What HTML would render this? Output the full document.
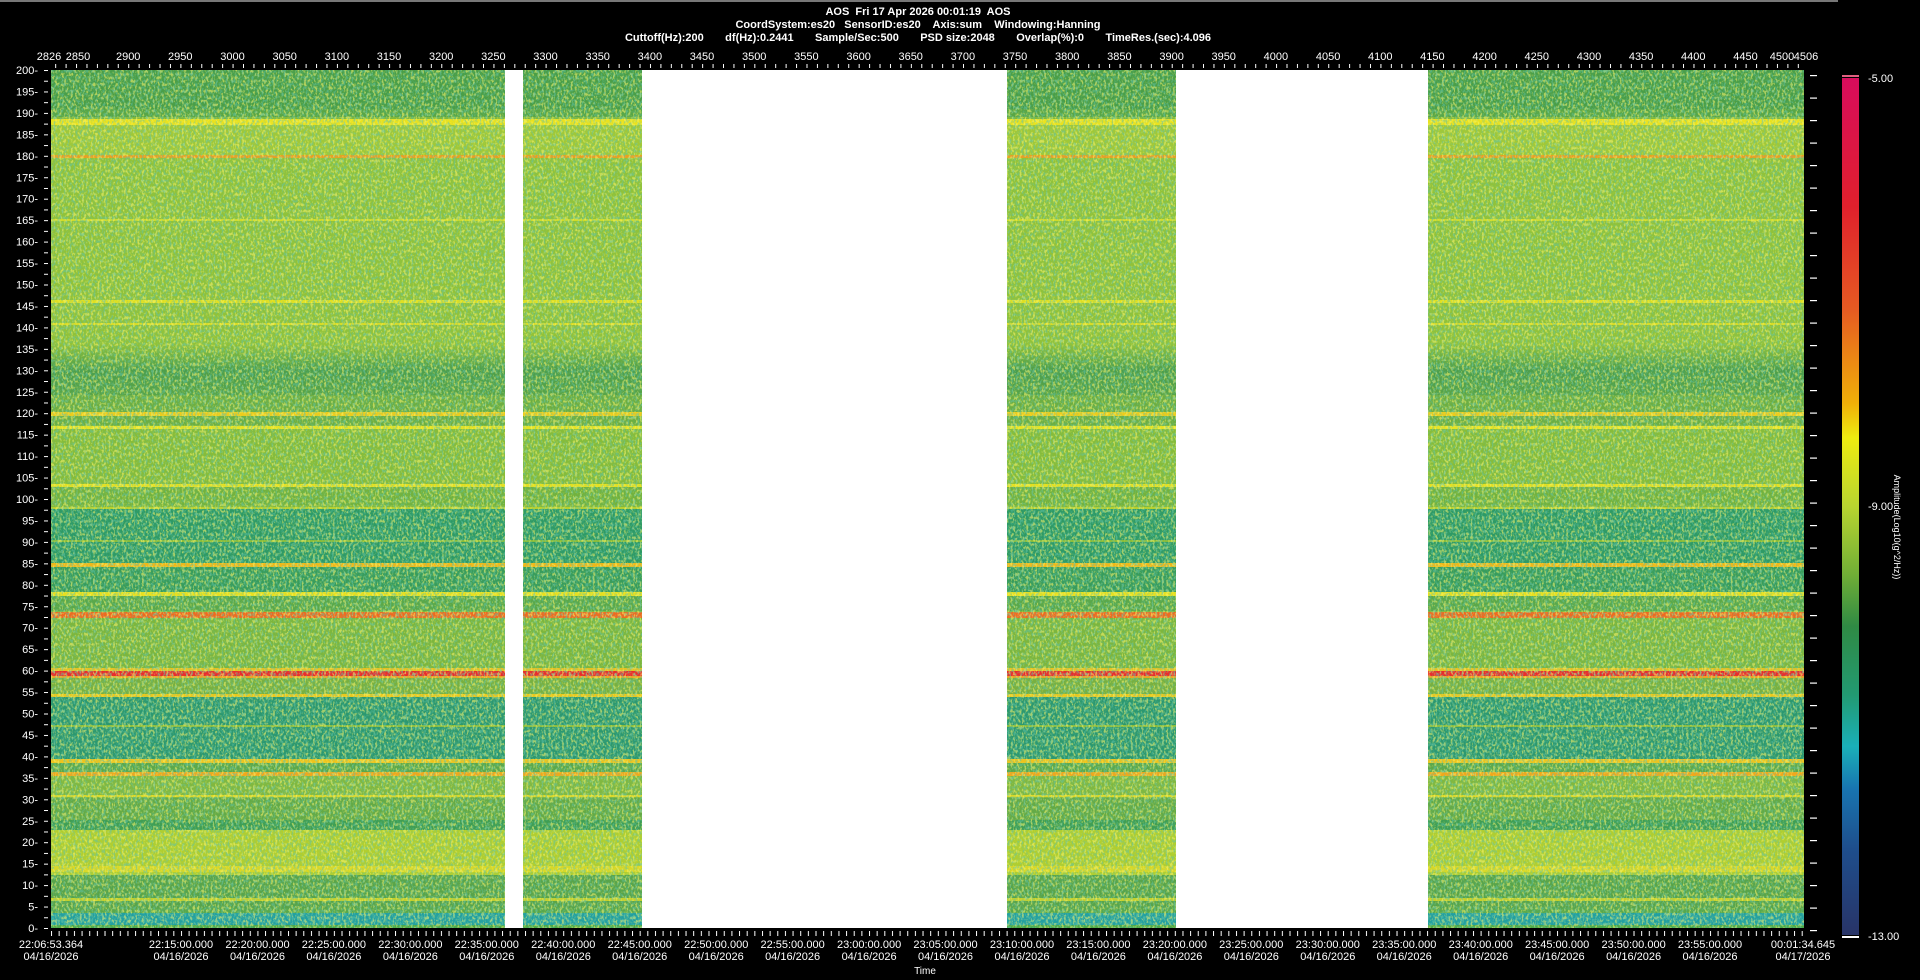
<!DOCTYPE html>
<html><head><meta charset="utf-8"><style>
html,body{margin:0;padding:0;background:#000;width:1920px;height:980px;overflow:hidden}
svg{display:block}
text{font-family:"Liberation Sans",sans-serif;fill:#fff;font-size:11px}
.t{font-weight:bold;font-size:11px;white-space:pre}
</style></head><body>
<svg width="1920" height="980" viewBox="0 0 1920 980" xmlns="http://www.w3.org/2000/svg">
<defs>
<filter id="ny" x="0" y="0" width="100%" height="100%">
<feTurbulence type="fractalNoise" baseFrequency="0.45 0.3" numOctaves="2" seed="3"/>
<feColorMatrix values="0 0 0 0 0.92  0 0 0 0 0.9  0 0 0 0 0.15  5 0 0 0 -2.4"/>
</filter>
<filter id="nd" x="0" y="0" width="100%" height="100%">
<feTurbulence type="fractalNoise" baseFrequency="0.5 0.3" numOctaves="2" seed="9"/>
<feColorMatrix values="0 0 0 0 0.12  0 0 0 0 0.55  0 0 0 0 0.4  5 0 0 0 -2.4"/>
</filter>
<linearGradient id="cb" x1="0" y1="0" x2="0" y2="1">
<stop offset="0" stop-color="#d80c5c"/>
<stop offset="0.15" stop-color="#e0202c"/>
<stop offset="0.27" stop-color="#e65a22"/>
<stop offset="0.38" stop-color="#f0b008"/>
<stop offset="0.42" stop-color="#eeec10"/>
<stop offset="0.5" stop-color="#b8d430"/>
<stop offset="0.58" stop-color="#70ae36"/>
<stop offset="0.64" stop-color="#2f8a44"/>
<stop offset="0.72" stop-color="#229a72"/>
<stop offset="0.78" stop-color="#1ab0b8"/>
<stop offset="0.83" stop-color="#1874b0"/>
<stop offset="0.9" stop-color="#1e4e8c"/>
<stop offset="1" stop-color="#283468"/>
</linearGradient>
<linearGradient id="dk" x1="0" y1="0" x2="0" y2="1">
<stop offset="0" stop-color="#8ec03a"/>
<stop offset="0.5" stop-color="#4c9e4c"/>
<stop offset="1" stop-color="#58a448"/>
</linearGradient>
<pattern id="tt" x="55.17" y="0" width="10.435" height="10" patternUnits="userSpaceOnUse"><rect x="0" y="0" width="1" height="10" fill="#fff"/></pattern>
<pattern id="bt" x="51" y="0" width="7.645" height="10" patternUnits="userSpaceOnUse"><rect x="0" y="0" width="1" height="10" fill="#fff"/></pattern>
<pattern id="lt" x="0" y="70" width="10" height="10.725" patternUnits="userSpaceOnUse"><rect x="0" y="0" width="10" height="1" fill="#fff"/></pattern>
<pattern id="rt" x="0" y="75" width="10" height="22.5" patternUnits="userSpaceOnUse"><rect x="0" y="0" width="10" height="1.2" fill="#fff"/></pattern>
</defs>
<rect x="0" y="0" width="1838" height="2" fill="#777"/>

<text class="t" x="918" y="15" text-anchor="middle" xml:space="preserve">AOS  Fri 17 Apr 2026 00:01:19  AOS</text>
<text class="t" x="918" y="28" text-anchor="middle" xml:space="preserve">CoordSystem:es20   SensorID:es20    Axis:sum    Windowing:Hanning</text>
<text class="t" x="918" y="41" text-anchor="middle" xml:space="preserve">Cuttoff(Hz):200       df(Hz):0.2441       Sample/Sec:500       PSD size:2048       Overlap(%):0       TimeRes.(sec):4.096</text>

<g>
<rect x="51" y="70" width="1753" height="858" fill="#80b83c"/>
<rect x="51" y="70" width="1753" height="39" fill="#4a9e48"/>
<rect x="51" y="109" width="1753" height="8" fill="#58a646"/>
<rect x="51" y="119" width="1753" height="6" fill="#eae21e"/>
<rect x="51" y="125" width="1753" height="30" fill="#a0c838"/>
<rect x="51" y="155" width="1753" height="3" fill="#e8a020"/>
<rect x="51" y="158" width="1753" height="200" fill="#90c23a"/>
<rect x="51" y="219" width="1753" height="2" fill="#d0dc28"/>
<rect x="51" y="300" width="1753" height="3" fill="#e0e020"/>
<rect x="51" y="323" width="1753" height="2" fill="#d8dc24"/>
<rect x="51" y="345" width="1753" height="50" fill="url(#dk)"/>
<rect x="51" y="412" width="1753" height="4" fill="#eccc1c"/>
<rect x="51" y="395" width="1753" height="17" fill="#6cae42"/>
<rect x="51" y="416" width="1753" height="9" fill="#6cae42"/>
<rect x="51" y="426" width="1753" height="3" fill="#e8e420"/>
<rect x="51" y="429" width="1753" height="55" fill="#86bc3a"/>
<rect x="51" y="484" width="1753" height="3" fill="#e4e020"/>
<rect x="51" y="487" width="1753" height="18" fill="#72b23e"/>
<rect x="51" y="507" width="1753" height="2" fill="#b8d02c"/>
<rect x="51" y="509" width="1753" height="54" fill="#2e9a66"/>
<rect x="51" y="540" width="1753" height="2" fill="#88bc3a"/>
<rect x="51" y="563" width="1753" height="4" fill="#f0b818"/>
<rect x="51" y="567" width="1753" height="25" fill="#389c5c"/>
<rect x="51" y="592" width="1753" height="4" fill="#e8e01e"/>
<rect x="51" y="596" width="1753" height="15" fill="#5aa84a"/>
<rect x="51" y="612" width="1753" height="6" fill="#ee6a20"/>
<rect x="51" y="618" width="1753" height="50" fill="#7cb63e"/>
<rect x="51" y="668" width="1753" height="3" fill="#e8c020"/>
<rect x="51" y="671" width="1753" height="5" fill="#e82c2c"/>
<rect x="51" y="676" width="1753" height="2" fill="#f0a020"/>
<rect x="51" y="678" width="1753" height="16" fill="#78b040"/>
<rect x="51" y="694" width="1753" height="3" fill="#eac81c"/>
<rect x="51" y="697" width="1753" height="62" fill="#2c9870"/>
<rect x="51" y="725" width="1753" height="2" fill="#8abc3a"/>
<rect x="51" y="759" width="1753" height="4" fill="#eec41c"/>
<rect x="51" y="763" width="1753" height="9" fill="#5ca84a"/>
<rect x="51" y="772" width="1753" height="4" fill="#f0a81c"/>
<rect x="51" y="776" width="1753" height="22" fill="#80b840"/>
<rect x="51" y="795" width="1753" height="2" fill="#dcd824"/>
<rect x="51" y="798" width="1753" height="22" fill="#64aa46"/>
<rect x="51" y="820" width="1753" height="10" fill="#3f9e54"/>
<rect x="51" y="830" width="1753" height="45" fill="#b0ce30"/>
<rect x="51" y="866" width="1753" height="6" fill="#d8d826"/>
<rect x="51" y="875" width="1753" height="33" fill="#58a44a"/>
<rect x="51" y="898" width="1753" height="3" fill="#c4d02a"/>
<rect x="51" y="908" width="1753" height="5" fill="#58a84c"/>
<rect x="51" y="913" width="1753" height="12" fill="#22a0a0"/>
<rect x="51" y="925" width="1753" height="3" fill="#4aa848"/>
<rect x="51" y="70" width="1753" height="858" filter="url(#ny)" opacity="0.6"/>
<rect x="51" y="70" width="1753" height="858" filter="url(#nd)" opacity="0.55"/>
</g>
<rect x="505" y="70" width="18" height="858" fill="#fff"/>
<rect x="642" y="70" width="365" height="858" fill="#fff"/>
<rect x="1176" y="70" width="252" height="858" fill="#fff"/>

<rect x="51" y="64" width="1753" height="4" fill="url(#tt)"/>
<rect x="51" y="931" width="1753" height="5" fill="url(#bt)"/>
<rect x="44" y="70" width="4" height="859" fill="url(#lt)"/>
<rect x="1810" y="75" width="7" height="860" fill="url(#rt)"/>

<g text-anchor="middle">
<text x="49" y="60">2826</text><text x="78" y="60">2850</text><text x="128.2" y="60">2900</text><text x="180.3" y="60">2950</text><text x="232.5" y="60">3000</text><text x="284.7" y="60">3050</text><text x="336.9" y="60">3100</text><text x="389" y="60">3150</text><text x="441.2" y="60">3200</text><text x="493.4" y="60">3250</text><text x="545.5" y="60">3300</text><text x="597.7" y="60">3350</text><text x="649.9" y="60">3400</text><text x="702" y="60">3450</text><text x="754.2" y="60">3500</text><text x="806.4" y="60">3550</text><text x="858.6" y="60">3600</text><text x="910.7" y="60">3650</text><text x="962.9" y="60">3700</text><text x="1015" y="60">3750</text><text x="1067.2" y="60">3800</text><text x="1119.4" y="60">3850</text><text x="1171.6" y="60">3900</text><text x="1223.7" y="60">3950</text><text x="1275.9" y="60">4000</text><text x="1328.1" y="60">4050</text><text x="1380.3" y="60">4100</text><text x="1432.4" y="60">4150</text><text x="1484.6" y="60">4200</text><text x="1536.8" y="60">4250</text><text x="1589" y="60">4300</text><text x="1641.1" y="60">4350</text><text x="1693.3" y="60">4400</text><text x="1745.5" y="60">4450</text><text x="1782" y="60">4500</text><text x="1806" y="60">4506</text>
</g>

<g text-anchor="end">
<text x="38" y="74">200-</text><text x="38" y="95.5">195-</text><text x="38" y="116.9">190-</text><text x="38" y="138.4">185-</text><text x="38" y="159.8">180-</text><text x="38" y="181.3">175-</text><text x="38" y="202.7">170-</text><text x="38" y="224.2">165-</text><text x="38" y="245.6">160-</text><text x="38" y="267.1">155-</text><text x="38" y="288.5">150-</text><text x="38" y="310">145-</text><text x="38" y="331.4">140-</text><text x="38" y="352.9">135-</text><text x="38" y="374.3">130-</text><text x="38" y="395.8">125-</text><text x="38" y="417.2">120-</text><text x="38" y="438.7">115-</text><text x="38" y="460.1">110-</text><text x="38" y="481.6">105-</text><text x="38" y="503">100-</text><text x="38" y="524.5">95-</text><text x="38" y="545.9">90-</text><text x="38" y="567.4">85-</text><text x="38" y="588.8">80-</text><text x="38" y="610.3">75-</text><text x="38" y="631.7">70-</text><text x="38" y="653.2">65-</text><text x="38" y="674.6">60-</text><text x="38" y="696.1">55-</text><text x="38" y="717.5">50-</text><text x="38" y="739">45-</text><text x="38" y="760.4">40-</text><text x="38" y="781.9">35-</text><text x="38" y="803.3">30-</text><text x="38" y="824.8">25-</text><text x="38" y="846.2">20-</text><text x="38" y="867.7">15-</text><text x="38" y="889.1">10-</text><text x="38" y="910.6">5-</text><text x="38" y="932">0-</text>
</g>

<g text-anchor="middle">
<text x="51" y="948">22:06:53.364</text><text x="51" y="960">04/16/2026</text>
<text x="181" y="948">22:15:00.000</text><text x="181" y="960">04/16/2026</text>
<text x="257.5" y="948">22:20:00.000</text><text x="257.5" y="960">04/16/2026</text>
<text x="333.9" y="948">22:25:00.000</text><text x="333.9" y="960">04/16/2026</text>
<text x="410.4" y="948">22:30:00.000</text><text x="410.4" y="960">04/16/2026</text>
<text x="486.8" y="948">22:35:00.000</text><text x="486.8" y="960">04/16/2026</text>
<text x="563.3" y="948">22:40:00.000</text><text x="563.3" y="960">04/16/2026</text>
<text x="639.7" y="948">22:45:00.000</text><text x="639.7" y="960">04/16/2026</text>
<text x="716.2" y="948">22:50:00.000</text><text x="716.2" y="960">04/16/2026</text>
<text x="792.6" y="948">22:55:00.000</text><text x="792.6" y="960">04/16/2026</text>
<text x="869.1" y="948">23:00:00.000</text><text x="869.1" y="960">04/16/2026</text>
<text x="945.5" y="948">23:05:00.000</text><text x="945.5" y="960">04/16/2026</text>
<text x="1022" y="948">23:10:00.000</text><text x="1022" y="960">04/16/2026</text>
<text x="1098.4" y="948">23:15:00.000</text><text x="1098.4" y="960">04/16/2026</text>
<text x="1174.9" y="948">23:20:00.000</text><text x="1174.9" y="960">04/16/2026</text>
<text x="1251.3" y="948">23:25:00.000</text><text x="1251.3" y="960">04/16/2026</text>
<text x="1327.8" y="948">23:30:00.000</text><text x="1327.8" y="960">04/16/2026</text>
<text x="1404.2" y="948">23:35:00.000</text><text x="1404.2" y="960">04/16/2026</text>
<text x="1480.7" y="948">23:40:00.000</text><text x="1480.7" y="960">04/16/2026</text>
<text x="1557.1" y="948">23:45:00.000</text><text x="1557.1" y="960">04/16/2026</text>
<text x="1633.6" y="948">23:50:00.000</text><text x="1633.6" y="960">04/16/2026</text>
<text x="1710" y="948">23:55:00.000</text><text x="1710" y="960">04/16/2026</text>
<text x="1803" y="948">00:01:34.645</text><text x="1803" y="960">04/17/2026</text>
<text x="925" y="974" style="font-size:10px">Time</text>
</g>

<rect x="1842" y="75" width="17" height="2" fill="#e06080"/>
<rect x="1842" y="78" width="17" height="857" fill="url(#cb)"/>
<rect x="1842" y="936" width="17" height="2" fill="#fff"/>
<text x="1868" y="82">-5.00</text>
<text x="1868" y="510">-9.00</text>
<text x="1868" y="940">-13.00</text>
<text transform="translate(1894,527) rotate(90)" text-anchor="middle" style="font-size:9px">Amplitude(Log10(g^2/Hz))</text>
</svg>
</body></html>
